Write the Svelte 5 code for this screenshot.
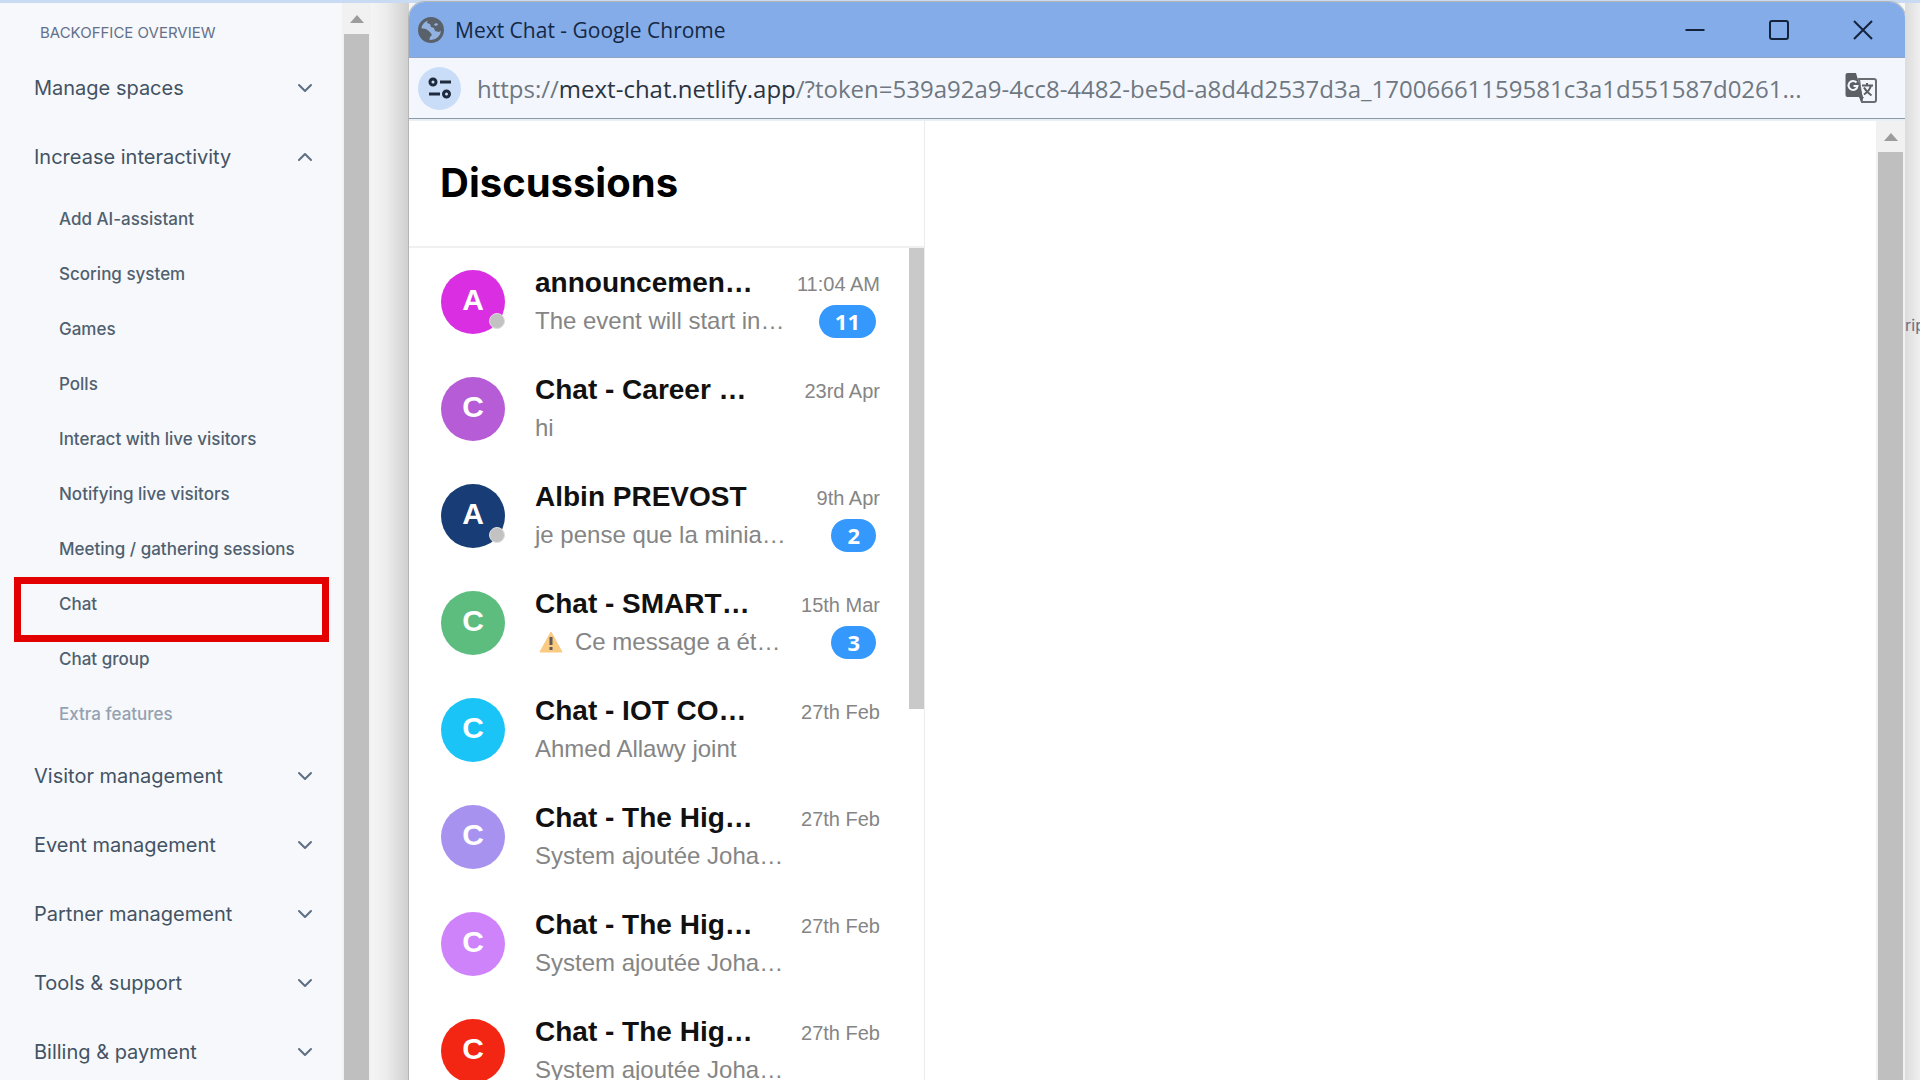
<script>
  const groupsBefore = [{ label: 'Manage spaces', open: false }, { label: 'Increase interactivity', open: true }];
  const subItems = [
    'Add AI-assistant', 'Scoring system', 'Games', 'Polls', 'Interact with live visitors',
    'Notifying live visitors', 'Meeting / gathering sessions', 'Chat', 'Chat group', 'Extra features'
  ];
  const groupsAfter = ['Visitor management', 'Event management', 'Partner management', 'Tools & support', 'Billing & payment']
    .map((label) => ({ label, open: false }));
  const chats = [
    { initial: 'A', color: '#d92ee2', name: 'announcemen…', text: 'The event will start in…', time: '11:04 AM', unread: 11, status: true },
    { initial: 'C', color: '#b65cd6', name: 'Chat - Career …', text: 'hi', time: '23rd Apr' },
    { initial: 'A', color: '#173c76', name: 'Albin PREVOST', text: 'je pense que la minia…', time: '9th Apr', unread: 2, status: true },
    { initial: 'C', color: '#5dbd7f', name: 'Chat - SMART…', text: 'Ce message a ét…', time: '15th Mar', unread: 3, warning: true },
    { initial: 'C', color: '#1ac4f7', name: 'Chat - IOT CO…', text: 'Ahmed Allawy joint', time: '27th Feb' },
    { initial: 'C', color: '#a793ef', name: 'Chat - The Hig…', text: 'System ajoutée Joha…', time: '27th Feb' },
    { initial: 'C', color: '#cf83fb', name: 'Chat - The Hig…', text: 'System ajoutée Joha…', time: '27th Feb' },
    { initial: 'C', color: '#f32613', name: 'Chat - The Hig…', text: 'System ajoutée Joha…', time: '27th Feb' }
  ];
</script>

{#snippet group(item)}
  <button class="group" aria-expanded={item.open}>
    <span>{item.label}</span>
    <svg class:flip={item.open} width="16" height="10" viewBox="0 0 16 10" aria-hidden="true">
      <path d="M2 2l6 6 6-6" fill="none" stroke="#5d6f83" stroke-width="2" stroke-linecap="round" stroke-linejoin="round" />
    </svg>
  </button>
{/snippet}

{#snippet scrollbar()}
  <div class="scrollbar" aria-hidden="true">
    <svg width="14" height="8" viewBox="0 0 14 8"><path d="M0 8L7 0l7 8z" fill="#9c9c9c" /></svg>
    <div class="thumb"></div>
  </div>
{/snippet}

<div class="desktop">
  <nav class="sidebar" aria-label="Backoffice">
    <h2>BACKOFFICE OVERVIEW</h2>
    {#each groupsBefore as item}{@render group(item)}{/each}
    <ul>
      {#each subItems as label}
        <li>
          <a href="#top" class:muted={label === 'Extra features'}>{label}</a>
          {#if label === 'Chat'}<span class="marker"></span>{/if}
        </li>
      {/each}
    </ul>
    {#each groupsAfter as item}{@render group(item)}{/each}
  </nav>
  <div class="page-scroll">{@render scrollbar()}</div>
  <div class="gutter"></div>

  <section class="window" aria-label="Mext Chat">
    <header class="titlebar">
      <svg width="26" height="26" viewBox="0 0 26 26" aria-hidden="true">
        <circle cx="13" cy="13" r="11.500" fill="#93b2e0" stroke="#59616b" stroke-width="3" />
        <path d="M2 11l6 1 4 3 2 3-2 2-1 4-5-2-4-6z" fill="#59616b" />
        <path d="M10 2l-1 4 3 1 1 3 3 1 1 3 4 1 3-2-1-6-5-5z" fill="#59616b" />
        <path d="M16 7l3-1 1 2-3 1z" fill="#93b2e0" />
      </svg>
      <h1>Mext Chat - Google Chrome</h1>
      <button aria-label="Minimize"><svg width="22" height="22" viewBox="0 0 22 22"><path d="M1.500 11h19" /></svg></button>
      <button aria-label="Maximize"><svg width="22" height="22" viewBox="0 0 22 22"><rect x="2" y="2" width="18" height="18" rx="2" /></svg></button>
      <button aria-label="Close"><svg width="22" height="22" viewBox="0 0 22 22"><path d="M2 2l18 18M20 2L2 20" /></svg></button>
    </header>
    <div class="toolbar">
      <button class="site-info" aria-label="Site information">
        <svg width="24" height="22" viewBox="0 0 24 22" fill="none" stroke="#1f2b3d" stroke-width="3">
          <circle cx="5" cy="5" r="3" /><path d="M12 5h11M1 17h11" /><circle cx="18.500" cy="17" r="3" />
        </svg>
      </button>
      <div class="url">https://<b>mext-chat.netlify.app</b>/?token=539a92a9-4cc8-4482-be5d-a8d4d2537d3a_17006661159581c3a1d551587d0261...</div>
      <button class="translate" aria-label="Translate this page">
        <svg width="32" height="32" viewBox="0 0 32 32">
          <path d="M14 7h15a2 2 0 0 1 2 2v19a2 2 0 0 1-2 2H17z" fill="#f3f6fd" stroke="#6a6d72" stroke-width="2" />
          <path d="M2.500 1H11l7 24H2.500A2 2 0 0 1 .5 23V3a2 2 0 0 1 2-2z" fill="#5c5f63" />
          <path d="M14 25h5l-3 5z" fill="#5c5f63" />
          <path d="M11.500 10.500A4.500 4.500 0 1 0 12.500 14H8.500" fill="none" stroke="#f3f6fd" stroke-width="2" />
          <path d="M17 13.500h11M22 11v2.500M26 13.500c-1 4-4 7-7 9M19 15.500c1.500 3 4 5.500 7.500 8" fill="none" stroke="#5c5f63" stroke-width="2" />
        </svg>
      </button>
    </div>
    <div class="content">
      <aside>
        <div class="heading"><h2>Discussions</h2></div>
        <div class="list-wrap">
          <ul class="chats">
            {#each chats as chat}
              <li>
                <div class="avatar" style:background={chat.color}>
                  {chat.initial}
                  {#if chat.status}<span class="status"></span>{/if}
                </div>
                <div class="body">
                  <div class="line">
                    <h3>{chat.name}</h3>
                    <time>{chat.time}</time>
                  </div>
                  <div class="line">
                    <p>
                      {#if chat.warning}
                        <svg width="32" height="24" viewBox="0 0 32 24" aria-hidden="true">
                          <path d="M16 2L27 22H5z" fill="#fbca82" stroke="#fbca82" stroke-linejoin="round" />
                          <path d="M16 7v8M16 17v3" stroke="#5e5a55" stroke-width="3" />
                        </svg>
                      {/if}
                      {chat.text}
                    </p>
                    {#if chat.unread}<span class="badge">{chat.unread}</span>{/if}
                  </div>
                </div>
              </li>
            {/each}
          </ul>
          <div class="list-thumb"></div>
        </div>
      </aside>
      <main></main>
      {@render scrollbar()}
    </div>
  </section>
  <div class="behind"><span>rip</span></div>
</div>

<style>
  :global(body) { margin: 0; }
  h1, h2, h3, p, ul { margin: 0; padding: 0; font-weight: 400; }
  ul { list-style: none; }
  button { border: 0; background: none; padding: 0; font: inherit; color: inherit; }
  svg { display: block; flex: none; }
  .desktop {
    box-sizing: border-box; display: flex; height: 100vh; overflow: hidden;
    background: linear-gradient(#c8dbf3 3px, #f7f7f7 3px);
    font-family: Inter, sans-serif;
  }
  .sidebar { flex: none; width: 342px; margin-top: 3px; background: #f6f8fb; color: #435364; overflow: hidden; }
  .sidebar h2 { padding-left: 40px; font-size: 15px; line-height: 60px; height: 50px; color: #64708a; }
  .group {
    display: flex; align-items: center; justify-content: space-between; width: 100%; height: 69px;
    padding: 0 29px 0 34px; font-size: 20px; text-align: left;
  }
  .flip { transform: rotate(180deg); }
  .sidebar li { position: relative; display: flex; align-items: center; height: 55px; padding-left: 59px; font-size: 17px; font-weight: 500; }
  .sidebar a { color: #50606f; text-decoration: none; }
  .sidebar a.muted { color: #94a1b1; }
  .marker { position: absolute; inset: 1px 13px -11px 14px; border: 7px solid #e30000; pointer-events: none; }
  .page-scroll { display: flex; flex: none; margin-top: 3px; }
  .scrollbar { display: flex; flex-direction: column; align-items: center; flex: none; width: 29px; background: #f1f1f1; }
  .scrollbar svg { margin: 12px 0 11px; }
  .thumb { flex: 1; width: 25px; background: #bfbfbf; }
  .gutter { flex: none; width: 38px; margin-top: 3px; background: linear-gradient(90deg, #f5f5f5, #ececec 40%, #cfcfcf); }
  .window {
    display: flex; flex-direction: column; flex: 1; min-width: 0; margin-top: 2px; overflow: hidden;
    background: #fff; border-radius: 16px 16px 0 0; box-shadow: 0 0 0 1px #b5b5b5;
  }
  .titlebar { display: flex; align-items: center; flex: none; height: 55px; padding-left: 9px; background: #84ace8; border-bottom: 1px solid #93a4c6; }
  .titlebar h1 { flex: 1; padding-left: 11px; font: 21px "Open Sans", sans-serif; color: #142844; }
  .titlebar button { display: flex; align-items: center; justify-content: center; width: 84px; height: 100%; }
  .titlebar button svg { fill: none; stroke: #14233c; stroke-width: 2; }
  .toolbar { display: flex; align-items: center; flex: none; height: 60px; padding: 0 28px 0 9px; background: #f3f7fd; border-bottom: 1px solid #8b98a8; }
  .site-info { display: flex; align-items: center; justify-content: center; flex: none; width: 43px; height: 43px; border-radius: 50%; background: #c9dcf8; }
  .url { flex: 1; min-width: 0; padding-left: 16px; white-space: nowrap; overflow: hidden; font: 24px "Open Sans", sans-serif; color: #6f7781; }
  .url b { font-weight: 400; color: #2b3440; }
  .content { display: flex; flex: 1; min-height: 0; border-top: 2px solid #e8f0f6; }
  aside { display: flex; flex-direction: column; flex: none; width: 515px; border-right: 1px solid #ececec; font-family: "Liberation Sans", sans-serif; }
  .heading { display: flex; align-items: center; flex: none; height: 125px; padding-left: 31px; border-bottom: 2px solid #f0f0f0; }
  .heading h2 { padding-bottom: 3px; font: 700 40px Inter, sans-serif; color: #000; }
  .list-wrap { display: flex; flex: 1; min-height: 0; }
  .chats { flex: 1; overflow: hidden; }
  .list-thumb { width: 15px; height: 461px; background: #c9c9c9; }
  .chats li { display: flex; align-items: center; height: 107px; padding: 0 29px 0 32px; }
  .avatar {
    position: relative; flex: none; width: 64px; height: 64px; border-radius: 50%; text-align: center;
    font-size: 30px; line-height: 60px; font-weight: 700; color: #fff;
  }
  .status { position: absolute; right: 0; bottom: 5px; width: 14px; height: 14px; border-radius: 50%; background: #c2c2c2; border: 1px solid #dedede; }
  .body { flex: 1; min-width: 0; padding-left: 30px; }
  .line { display: flex; align-items: center; justify-content: space-between; height: 38px; white-space: nowrap; }
  h3 { font-size: 28px; font-weight: 700; color: #111; }
  time { padding-top: 4px; font-size: 20px; color: #858585; }
  p { display: flex; align-items: center; gap: 8px; font-size: 24px; color: #858585; }
  .badge {
    margin: 2px 4px 0 0; padding: 0 16px; border-radius: 17px; background: #3498fd; color: #fff;
    text-align: center; font: 700 22px/33px "Open Sans", sans-serif;
  }
  main { flex: 1; background: #fff; }
  .behind { flex: none; width: 15px; margin-top: 3px; overflow: hidden; background: linear-gradient(90deg, #dcdcdc, #efefef); }
  .behind span { display: block; padding-top: 312px; font-size: 16px; color: #647084; }
</style>
